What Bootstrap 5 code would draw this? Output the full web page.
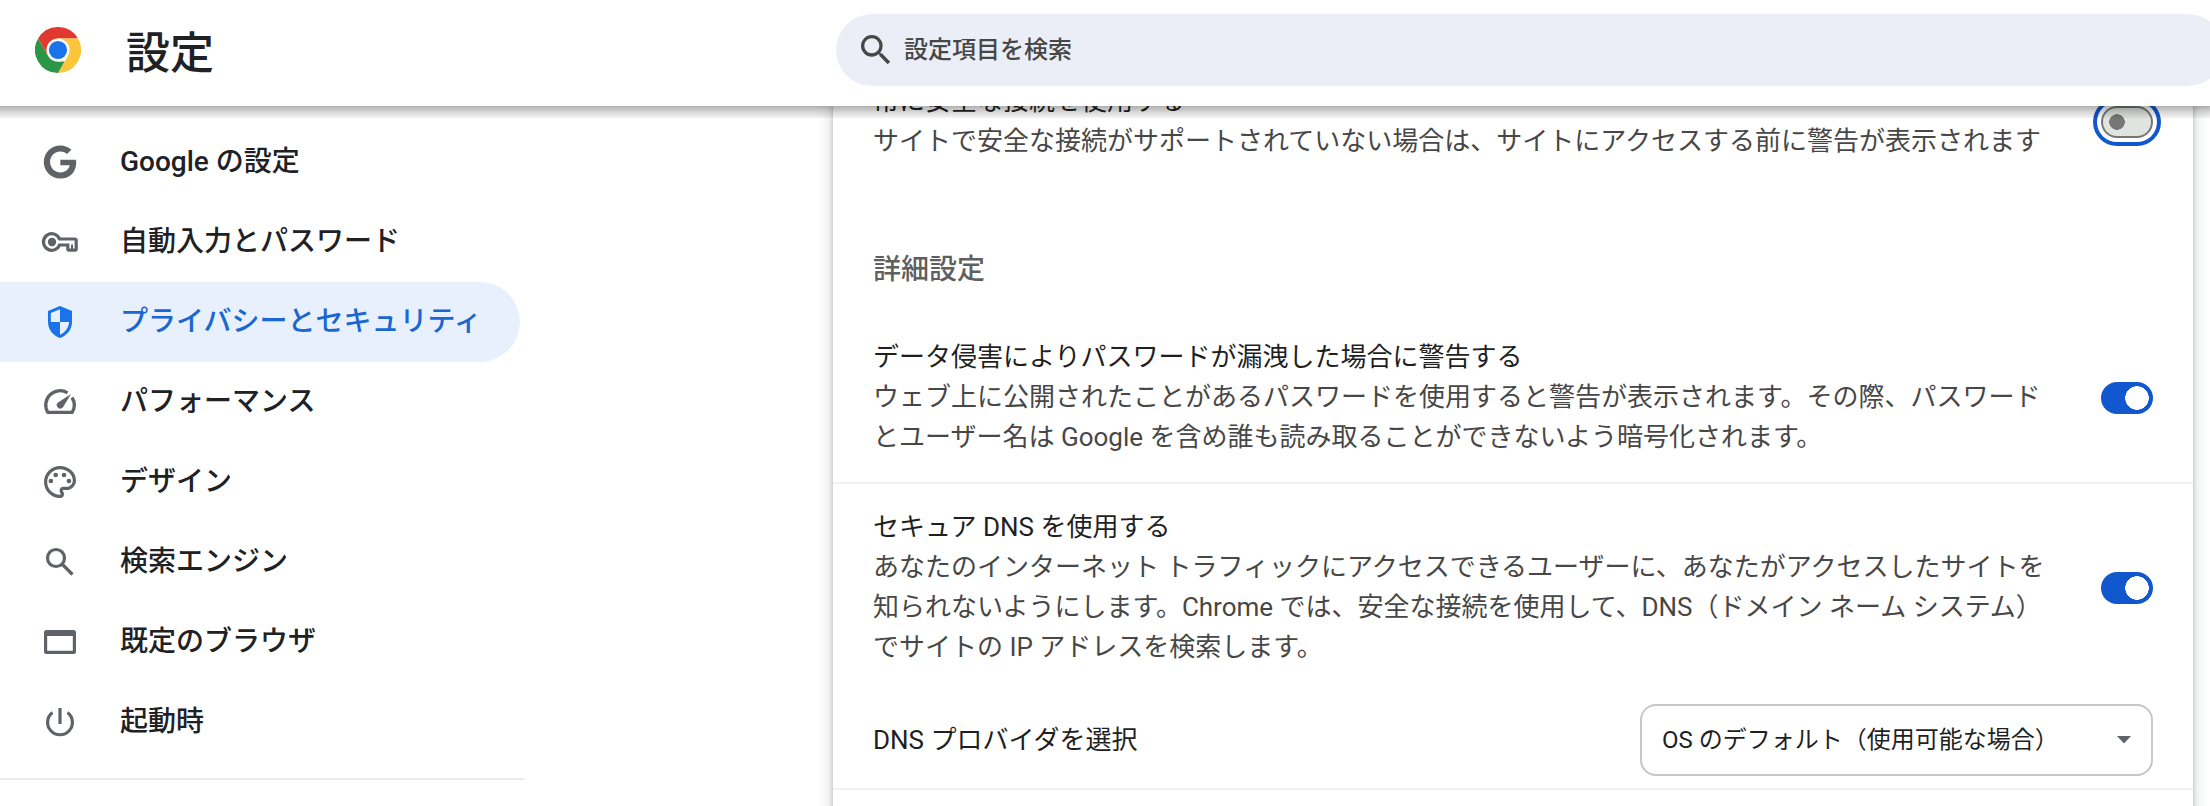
<!DOCTYPE html>
<html lang="ja">
<head>
<meta charset="utf-8">
<title>設定</title>
<link href="https://cdn.jsdelivr.net/npm/bootstrap@5.3.0/dist/css/bootstrap.min.css" rel="stylesheet">
<style>
  body { font-family: Roboto, "Noto Sans CJK JP", sans-serif; font-size: 26px; line-height: 40px; color: #1f1f1f; height: 806px; background: #fff; }
  .topbar { height: 106px; z-index: 3; background: #fff; }
  .topbar::after { content: ""; position: absolute; left: 0; right: 0; top: 106px; height: 12px; background: linear-gradient(rgba(0,0,0,.31), rgba(0,0,0,.16) 50%, rgba(0,0,0,.04)); }
  .brand-zone { width: 836px; padding-left: 35px; padding-bottom: 6px; }
  .page-title { font-size: 44px; font-weight: 500; line-height: 60px; margin: 0 0 0 45px; padding-top: 8px; color: #202124; }
  .search-pill { width: 1388px; height: 72px; margin-top: 14px; padding-left: 20px; background: #ebeef7; font-size: 24px; font-weight: 500; color: #474747; }
  .side-menu { width: 524px; padding-top: 16px; }
  .side-menu .nav-link { height: 80px; width: 520px; padding: 0 0 0 40px; color: #202124; font-size: 28px; font-weight: 500; }
  .side-menu .nav-link.active { background: #e8f0fe; color: #1967d2; border-radius: 0 40px 40px 0; }
  .ico { width: 40px; height: 40px; margin-right: 40px; color: #5f6368; }
  .active .ico { color: #1a73e8; }
  .side-rule { height: 2px; background: #ebebeb; margin-top: 16px; }
  .settings { width: 1360px; margin-left: 309px; margin-top: -30px; height: 760px; box-shadow: 0 2px 4px rgba(60,64,67,.3), 0 4px 12px 4px rgba(60,64,67,.15); }
  .set-row { padding: 0 40px; }
  .row-https { padding-top: 5px; }
  .row-https .form-switch { padding-top: 25px !important; }
  .row-heading { padding-top: 89px; padding-bottom: 48px; }
  .row-leak { padding-bottom: 24px; }
  .row-dns { padding-top: 24px; }
  .row-leak .copy, .row-dns .copy { margin-top: -1px; margin-bottom: 1px; }
  .row-provider { padding-top: 36px; padding-bottom: 12px; }
  .hint { color: #474747; }
  .copy { width: 1180px; }
  .rule { border-bottom: 2px solid #f0f0f0; }
  .section-title { font-size: 28px; line-height: 40px; font-weight: 500; color: #5f5f5f; margin: 0; }
  .form-switch { min-height: 0; margin: 0; }
  .form-switch .toggle { width: 52px; height: 32px; margin: 0; border: 0; display: block; float: none; box-shadow: none; background-repeat: no-repeat; }
  .form-switch .toggle:checked { background-color: #1157ce; background-size: 24px 24px; background-position: 24px 4px; background-image: radial-gradient(circle closest-side, #fff 96%, transparent); }
  .form-switch .toggle.off { border: 2px solid #747775; background-color: #e1e3e1; background-size: 16px 16px; background-position: 6px 6px; background-image: radial-gradient(circle closest-side, #747775 94%, transparent); box-shadow: 0 0 0 4px #fff, 0 0 0 8px #1157ce; }
  .picker { width: 513px; height: 72px; border: 2px solid #c7c7c7; border-radius: 16px; font-size: 24px; padding: 0 20px; }
</style>
</head>
<body class="overflow-hidden">
<header class="topbar position-relative d-flex align-items-start">
  <div class="brand-zone d-flex align-items-center flex-shrink-0 h-100">
    <svg width="46" height="46" viewBox="0 0 46 46">
      <path fill="#e03a30" d="M23 23 3.080 11.500A23 23 0 0 1 42.920 11.500H23z"/>
      <path fill="#fcc53b" d="M42.920 11.500A23 23 0 0 1 23 46L33 28.700 23 11.500z"/>
      <path fill="#2b9646" d="M23 46A23 23 0 0 1 3.080 11.500L13.040 28.700 23 34.500H29.600z"/>
      <path fill="#e03a30" d="M3.080 11.500 13.040 28.750 23 23V11.500z"/>
      <circle cx="23" cy="23" r="11.500" fill="#fff"/>
      <circle cx="23" cy="23" r="9.100" fill="#1a73e8"/>
    </svg>
    <h1 class="page-title">設定</h1>
  </div>
  <div class="search-pill rounded-pill d-flex align-items-center flex-shrink-0">
    <svg width="40" height="40" viewBox="0 0 24 24" fill="currentColor" class="me-2"><path d="M15.500 14h-.79l-.28-.27A6.470 6.470 0 0 0 16 9.500 6.500 6.500 0 1 0 9.500 16c1.610 0 3.090-.59 4.230-1.570l.27.28v.79l5 4.990L20.490 19l-4.990-5zm-6 0C7.010 14 5 11.990 5 9.500S7.010 5 9.500 5 14 7.010 14 9.500 11.990 14 9.500 14z"/></svg>
    <span>設定項目を検索</span>
  </div>
</header>
<div class="d-flex">
  <nav class="side-menu flex-shrink-0">
    <div class="nav flex-column">
      <a class="nav-link d-flex align-items-center"><svg class="ico" viewBox="-2.5 -2.5 29 29" fill="currentColor"><path d="M12.240 10.285V14.400h6.806c-.275 1.765-2.056 5.174-6.806 5.174-4.095 0-7.439-3.389-7.439-7.574s3.345-7.574 7.439-7.574c2.330 0 3.891.989 4.785 1.849l3.254-3.138C18.189 1.186 15.479 0 12.240 0c-6.635 0-12 5.365-12 12s5.365 12 12 12c6.926 0 11.520-4.869 11.520-11.726 0-.788-.085-1.390-.189-1.989H12.240z"/></svg>Google の設定</a>
      <a class="nav-link d-flex align-items-center"><svg class="ico" viewBox="0 0 40 40" fill="none" stroke="currentColor" stroke-width="3.2"><path d="M19.500 17H35a1.200 1.200 0 0 1 1.200 1.200V27a1.200 1.200 0 0 1-1.200 1.200h-6a1.200 1.200 0 0 1-1.200-1.200v-4H19.500A8.300 8.300 0 1 1 19.500 17z"/><path d="M32 22.500V27" stroke-width="2"/><circle cx="12" cy="20" r="4.200" fill="currentColor" stroke="none"/></svg>自動入力とパスワード</a>
      <a class="nav-link active d-flex align-items-center"><svg class="ico" viewBox="0 0 40 40" fill="currentColor"><path fill-rule="evenodd" d="M20 4 32 9v11c0 7.500-5 13.500-12 16-7-2.500-12-8.500-12-16V9zM20 7.200 10.800 11v9H20zM20 20v12.800c5-2.200 8.600-7 9.200-12.800z"/></svg>プライバシーとセキュリティ</a>
      <a class="nav-link d-flex align-items-center"><svg class="ico" viewBox="0 0 40 40" fill="none" stroke="currentColor" stroke-width="3.3"><path d="M27.500 10.800A14.300 14.300 0 0 0 7.800 30.400H32.200A14.300 14.300 0 0 0 32 15.500" stroke-linejoin="round"/><path d="M31 12 23 25.300A3.500 3.500 0 1 1 17.700 20.700z" fill="currentColor" stroke="none"/></svg>パフォーマンス</a>
      <a class="nav-link d-flex align-items-center"><svg class="ico" viewBox="-.5 -.5 25 25" fill="currentColor"><path d="M12 22C6.490 22 2 17.510 2 12S6.490 2 12 2s10 4.040 10 9c0 3.310-2.690 6-6 6h-1.770c-.28 0-.5.22-.5.5 0 .12.05.23.13.33.41.47.64 1.060.64 1.670A2.500 2.500 0 0 1 12 22zm0-18c-4.410 0-8 3.590-8 8s3.590 8 8 8c.28 0 .5-.22.5-.5a.54.54 0 0 0-.14-.35c-.41-.46-.63-1.050-.63-1.650a2.500 2.500 0 0 1 2.500-2.500H16c2.210 0 4-1.790 4-4 0-3.860-3.590-7-8-7z"/><circle cx="6.300" cy="11.400" r="1.450"/><circle cx="9.300" cy="7.600" r="1.450"/><circle cx="14.500" cy="7.600" r="1.450"/><circle cx="17.600" cy="11.400" r="1.450"/></svg>デザイン</a>
      <a class="nav-link d-flex align-items-center"><svg class="ico" viewBox="0 0 40 40" fill="none" stroke="currentColor" stroke-width="3.2"><circle cx="16" cy="16" r="8.500"/><path d="M22 22 32.500 32.500"/></svg>検索エンジン</a>
      <a class="nav-link d-flex align-items-center"><svg class="ico" viewBox="0 0 40 40" fill="currentColor"><path fill-rule="evenodd" d="M6.500 8h27A2.500 2.500 0 0 1 36 10.500v19a2.500 2.500 0 0 1-2.500 2.500h-27A2.500 2.500 0 0 1 4 29.500v-19A2.500 2.500 0 0 1 6.500 8zM7.200 14v14.800h25.600V14z"/></svg>既定のブラウザ</a>
      <a class="nav-link d-flex align-items-center"><svg class="ico" viewBox="0 0 40 40" fill="none" stroke="currentColor" stroke-width="3.2"><path d="M20 6v16M12.500 10.500A12.400 12.400 0 1 0 27.500 10.500"/></svg>起動時</a>
    </div>
    <div class="side-rule"></div>
  </nav>
  <main class="settings bg-white flex-shrink-0">
    <section class="set-row row-https d-flex justify-content-between">
      <div class="copy"><div>常に安全な接続を使用する</div><div class="hint text-nowrap">サイトで安全な接続がサポートされていない場合は、サイトにアクセスする前に警告が表示されます</div></div>
      <div class="form-switch p-0"><input class="form-check-input toggle off" type="checkbox"></div>
    </section>
    <div class="set-row row-heading"><h2 class="section-title">詳細設定</h2></div>
    <section class="set-row row-leak rule d-flex align-items-center justify-content-between">
      <div class="copy text-nowrap"><div>データ侵害によりパスワードが漏洩した場合に警告する</div><div class="hint">ウェブ上に公開されたことがあるパスワードを使用すると警告が表示されます。その際、パスワード<br>とユーザー名は Google を含め誰も読み取ることができないよう暗号化されます。</div></div>
      <div class="form-switch p-0"><input class="form-check-input toggle" type="checkbox" checked></div>
    </section>
    <section class="set-row row-dns d-flex align-items-center justify-content-between">
      <div class="copy text-nowrap"><div>セキュア DNS を使用する</div><div class="hint">あなたのインターネット トラフィックにアクセスできるユーザーに、あなたがアクセスしたサイトを<br>知られないようにします。Chrome では、安全な接続を使用して、DNS（ドメイン ネーム システム）<br>でサイトの IP アドレスを検索します。</div></div>
      <div class="form-switch p-0"><input class="form-check-input toggle" type="checkbox" checked></div>
    </section>
    <section class="set-row row-provider rule d-flex align-items-center justify-content-between">
      <div>DNS プロバイダを選択</div>
      <div class="picker d-flex align-items-center justify-content-between"><span>OS のデフォルト（使用可能な場合）</span><svg width="14" height="8" viewBox="0 0 14 8"><path d="M0 0h14L7 7.500z" fill="#5f6368"/></svg></div>
    </section>
  </main>
</div>
<script src="https://cdn.jsdelivr.net/npm/bootstrap@5.3.0/dist/js/bootstrap.bundle.min.js"></script>
</body>
</html>
